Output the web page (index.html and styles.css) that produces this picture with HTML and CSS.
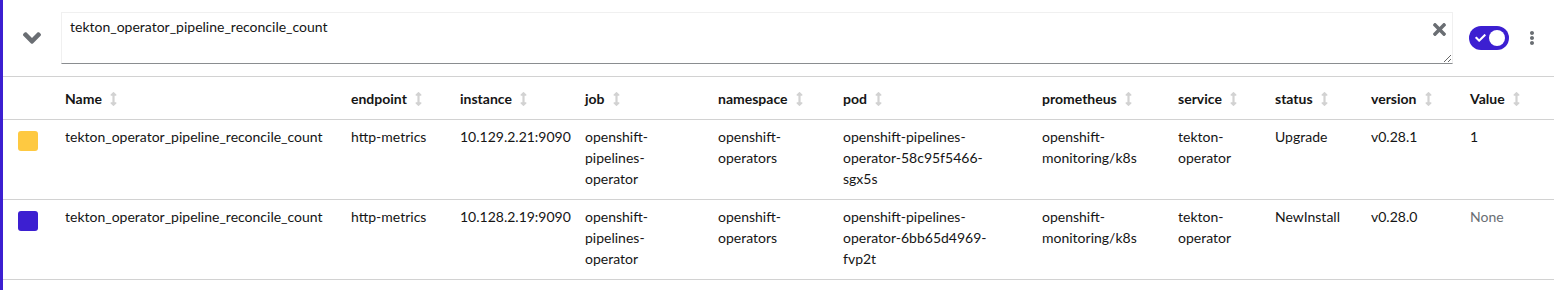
FILE: index.html
```html
<!DOCTYPE html>
<html lang="en">
<head>
<meta charset="utf-8">
<title>Query</title>
<link rel="stylesheet" href="styles.css">
</head>
<body>
<div class="panel">
  <div class="query-row">
    <button class="chevron-btn" aria-label="Collapse">
      <svg class="chevron" viewBox="0 150 320 212" width="18" height="12"><path d="M143 352.3L7 216.3c-9.4-9.4-9.4-24.6 0-33.9l22.6-22.6c9.4-9.4 24.6-9.4 33.9 0l96.4 96.4 96.4-96.4c9.4-9.4 24.6-9.4 33.9 0l22.6 22.6c9.4 9.4 9.4 24.6 0 33.9l-136 136c-9.2 9.4-24.4 9.4-33.8 0z"/></svg>
    </button>
    <div class="query-box">
      <textarea class="query-input" spellcheck="false">tekton_operator_pipeline_reconcile_count</textarea>
      <button class="clear-btn" aria-label="Clear">
        <svg viewBox="0 80 352 352" width="13" height="13"><path d="M242.72 256l100.07-100.07c12.28-12.28 12.28-32.19 0-44.48l-22.24-22.24c-12.28-12.28-32.19-12.28-44.48 0L176 189.28 75.93 89.21c-12.28-12.28-32.19-12.28-44.48 0L9.21 111.45c-12.28 12.28-12.28 32.19 0 44.48L109.28 256 9.21 356.07c-12.28 12.28-12.28 32.19 0 44.48l22.24 22.24c12.28 12.28 32.2 12.28 44.48 0L176 322.72l100.07 100.07c12.28 12.28 32.2 12.28 44.48 0l22.24-22.24c12.28-12.28 12.28-32.19 0-44.48L242.72 256z"/></svg>
      </button>
    </div>
    <span class="switch" role="switch" aria-checked="true">
      <svg class="switch-check" viewBox="0 65 512 382" width="11" height="8"><path d="M173.898 439.404l-166.4-166.4c-9.997-9.997-9.997-26.206 0-36.204l36.203-36.204c9.997-9.998 26.207-9.998 36.204 0L192 312.69 432.095 72.596c9.997-9.997 26.207-9.997 36.204 0l36.203 36.204c9.997 9.997 9.997 26.206 0 36.204l-294.4 294.401c-9.998 9.997-26.207 9.997-36.204-.001z"/></svg>
      <span class="switch-knob"></span>
    </span>
    <button class="kebab-btn" aria-label="Actions">
      <svg viewBox="24 8 144 496" width="4" height="14"><path d="M96 184c39.8 0 72 32.2 72 72s-32.2 72-72 72-72-32.2-72-72 32.2-72 72-72zM24 80c0 39.8 32.2 72 72 72s72-32.2 72-72S135.8 8 96 8 24 40.2 24 80zm0 352c0 39.8 32.2 72 72 72s72-32.2 72-72-32.2-72-72-72-72 32.2-72 72z"/></svg>
    </button>
  </div>

  <table class="results">
    <colgroup>
      <col class="c-swatch"><col class="c-name"><col class="c-endpoint"><col class="c-instance"><col class="c-job"><col class="c-namespace"><col class="c-pod"><col class="c-prom"><col class="c-service"><col class="c-status"><col class="c-version"><col class="c-value">
    </colgroup>
    <thead>
      <tr>
        <th></th>
        <th>Name<svg class="sort" viewBox="0 0 256 512" width="7" height="14"><path d="M214.059 377.941H168V134.059h46.059c21.382 0 32.09-25.851 16.971-40.971L144.971 7.029c-9.373-9.373-24.568-9.373-33.941 0L24.971 93.088c-15.119 15.119-4.411 40.971 16.971 40.971H88v243.882H41.941c-21.382 0-32.09 25.851-16.971 40.971l86.059 86.059c9.373 9.373 24.568 9.373 33.941 0l86.059-86.059c15.12-15.119 4.412-40.971-16.97-40.971z"/></svg></th>
        <th>endpoint<svg class="sort" viewBox="0 0 256 512" width="7" height="14"><path d="M214.059 377.941H168V134.059h46.059c21.382 0 32.09-25.851 16.971-40.971L144.971 7.029c-9.373-9.373-24.568-9.373-33.941 0L24.971 93.088c-15.119 15.119-4.411 40.971 16.971 40.971H88v243.882H41.941c-21.382 0-32.09 25.851-16.971 40.971l86.059 86.059c9.373 9.373 24.568 9.373 33.941 0l86.059-86.059c15.12-15.119 4.412-40.971-16.97-40.971z"/></svg></th>
        <th>instance<svg class="sort" viewBox="0 0 256 512" width="7" height="14"><path d="M214.059 377.941H168V134.059h46.059c21.382 0 32.09-25.851 16.971-40.971L144.971 7.029c-9.373-9.373-24.568-9.373-33.941 0L24.971 93.088c-15.119 15.119-4.411 40.971 16.971 40.971H88v243.882H41.941c-21.382 0-32.09 25.851-16.971 40.971l86.059 86.059c9.373 9.373 24.568 9.373 33.941 0l86.059-86.059c15.12-15.119 4.412-40.971-16.97-40.971z"/></svg></th>
        <th>job<svg class="sort" viewBox="0 0 256 512" width="7" height="14"><path d="M214.059 377.941H168V134.059h46.059c21.382 0 32.09-25.851 16.971-40.971L144.971 7.029c-9.373-9.373-24.568-9.373-33.941 0L24.971 93.088c-15.119 15.119-4.411 40.971 16.971 40.971H88v243.882H41.941c-21.382 0-32.09 25.851-16.971 40.971l86.059 86.059c9.373 9.373 24.568 9.373 33.941 0l86.059-86.059c15.12-15.119 4.412-40.971-16.97-40.971z"/></svg></th>
        <th>namespace<svg class="sort" viewBox="0 0 256 512" width="7" height="14"><path d="M214.059 377.941H168V134.059h46.059c21.382 0 32.09-25.851 16.971-40.971L144.971 7.029c-9.373-9.373-24.568-9.373-33.941 0L24.971 93.088c-15.119 15.119-4.411 40.971 16.971 40.971H88v243.882H41.941c-21.382 0-32.09 25.851-16.971 40.971l86.059 86.059c9.373 9.373 24.568 9.373 33.941 0l86.059-86.059c15.12-15.119 4.412-40.971-16.97-40.971z"/></svg></th>
        <th>pod<svg class="sort" viewBox="0 0 256 512" width="7" height="14"><path d="M214.059 377.941H168V134.059h46.059c21.382 0 32.09-25.851 16.971-40.971L144.971 7.029c-9.373-9.373-24.568-9.373-33.941 0L24.971 93.088c-15.119 15.119-4.411 40.971 16.971 40.971H88v243.882H41.941c-21.382 0-32.09 25.851-16.971 40.971l86.059 86.059c9.373 9.373 24.568 9.373 33.941 0l86.059-86.059c15.12-15.119 4.412-40.971-16.97-40.971z"/></svg></th>
        <th>prometheus<svg class="sort" viewBox="0 0 256 512" width="7" height="14"><path d="M214.059 377.941H168V134.059h46.059c21.382 0 32.09-25.851 16.971-40.971L144.971 7.029c-9.373-9.373-24.568-9.373-33.941 0L24.971 93.088c-15.119 15.119-4.411 40.971 16.971 40.971H88v243.882H41.941c-21.382 0-32.09 25.851-16.971 40.971l86.059 86.059c9.373 9.373 24.568 9.373 33.941 0l86.059-86.059c15.12-15.119 4.412-40.971-16.97-40.971z"/></svg></th>
        <th>service<svg class="sort" viewBox="0 0 256 512" width="7" height="14"><path d="M214.059 377.941H168V134.059h46.059c21.382 0 32.09-25.851 16.971-40.971L144.971 7.029c-9.373-9.373-24.568-9.373-33.941 0L24.971 93.088c-15.119 15.119-4.411 40.971 16.971 40.971H88v243.882H41.941c-21.382 0-32.09 25.851-16.971 40.971l86.059 86.059c9.373 9.373 24.568 9.373 33.941 0l86.059-86.059c15.12-15.119 4.412-40.971-16.97-40.971z"/></svg></th>
        <th>status<svg class="sort" viewBox="0 0 256 512" width="7" height="14"><path d="M214.059 377.941H168V134.059h46.059c21.382 0 32.09-25.851 16.971-40.971L144.971 7.029c-9.373-9.373-24.568-9.373-33.941 0L24.971 93.088c-15.119 15.119-4.411 40.971 16.971 40.971H88v243.882H41.941c-21.382 0-32.09 25.851-16.971 40.971l86.059 86.059c9.373 9.373 24.568 9.373 33.941 0l86.059-86.059c15.12-15.119 4.412-40.971-16.97-40.971z"/></svg></th>
        <th>version<svg class="sort" viewBox="0 0 256 512" width="7" height="14"><path d="M214.059 377.941H168V134.059h46.059c21.382 0 32.09-25.851 16.971-40.971L144.971 7.029c-9.373-9.373-24.568-9.373-33.941 0L24.971 93.088c-15.119 15.119-4.411 40.971 16.971 40.971H88v243.882H41.941c-21.382 0-32.09 25.851-16.971 40.971l86.059 86.059c9.373 9.373 24.568 9.373 33.941 0l86.059-86.059c15.12-15.119 4.412-40.971-16.97-40.971z"/></svg></th>
        <th>Value<svg class="sort" viewBox="0 0 256 512" width="7" height="14"><path d="M214.059 377.941H168V134.059h46.059c21.382 0 32.09-25.851 16.971-40.971L144.971 7.029c-9.373-9.373-24.568-9.373-33.941 0L24.971 93.088c-15.119 15.119-4.411 40.971 16.971 40.971H88v243.882H41.941c-21.382 0-32.09 25.851-16.971 40.971l86.059 86.059c9.373 9.373 24.568 9.373 33.941 0l86.059-86.059c15.12-15.119 4.412-40.971-16.97-40.971z"/></svg></th>
      </tr>
    </thead>
    <tbody>
      <tr>
        <td><span class="swatch swatch-yellow"></span></td>
        <td class="nowrap">tekton_operator_pipeline_reconcile_count</td>
        <td>http-metrics</td>
        <td>10.129.2.21:9090</td>
        <td>openshift-pipelines-operator</td>
        <td>openshift-operators</td>
        <td class="pod">openshift-pipelines-operator-58c95f5466-sgx5s</td>
        <td>openshift-monitoring/k8s</td>
        <td>tekton-operator</td>
        <td>Upgrade</td>
        <td>v0.28.1</td>
        <td>1</td>
      </tr>
      <tr>
        <td><span class="swatch swatch-purple"></span></td>
        <td class="nowrap">tekton_operator_pipeline_reconcile_count</td>
        <td>http-metrics</td>
        <td>10.128.2.19:9090</td>
        <td>openshift-pipelines-operator</td>
        <td>openshift-operators</td>
        <td class="pod">openshift-pipelines-operator-6bb65d4969-fvp2t</td>
        <td>openshift-monitoring/k8s</td>
        <td>tekton-operator</td>
        <td>NewInstall</td>
        <td>v0.28.0</td>
        <td class="muted">None</td>
      </tr>
    </tbody>
  </table>
</div>
</body>
</html>
```

FILE: styles.css
```css
* { box-sizing: border-box; }
html, body { margin: 0; padding: 0; background: #fff; }
body {
  font-family: "Lato", "Liberation Sans", sans-serif;
  font-size: 14px;
  line-height: 21px;
  color: #151515;
}
.panel {
  width: 1554px;
  height: 290px;
  border-left: 3px solid #3c1fd1;
  overflow: hidden;
}
.query-row {
  display: flex;
  align-items: center;
  height: 77px;
  padding: 0 0 1px 20px;
  border-bottom: 1px solid #d2d2d2;
}
.chevron-btn, .clear-btn, .kebab-btn {
  border: 0;
  background: none;
  padding: 0;
  margin: 0;
  display: flex;
  align-items: center;
  justify-content: center;
  cursor: pointer;
}
.chevron { fill: #6a6e73; display: block; }
.chevron-btn { width: 18px; height: 12px; margin-right: 20px; }
.query-box {
  position: relative;
  width: 1392px;
  height: 52px;
}
.query-input {
  display: block;
  width: 100%;
  height: 52px;
  margin: 0;
  padding: 3px 8px 5px;
  font: inherit;
  color: #151515;
  border: 1px solid #f0f0f0;
  border-bottom-color: #8a8d90;
  border-radius: 0;
  outline: none;
  resize: vertical;
  background: #fff;
}
.clear-btn {
  position: absolute;
  top: 11px;
  right: 7px;
  width: 13px;
  height: 13px;
}
.clear-btn svg { fill: #6a6e73; display: block; }
.switch {
  position: relative;
  margin-left: 16px;
  width: 40px;
  height: 24px;
  border-radius: 12px;
  background: #3c1fd1;
  display: flex;
  align-items: center;
}
.switch-check { fill: #fff; margin-left: 6px; display: block; }
.switch-knob {
  position: absolute;
  right: 4px;
  top: 4px;
  width: 16px;
  height: 16px;
  border-radius: 50%;
  background: #fff;
}
.kebab-btn { margin-left: 21px; width: 4px; height: 14px; }
.kebab-btn svg { fill: #6a6e73; display: block; }

.results {
  width: 1551px;
  table-layout: fixed;
  border-collapse: collapse;
}
.c-swatch { width: 62px; }
.c-name { width: 286px; }
.c-endpoint { width: 109px; }
.c-instance { width: 125px; }
.c-job { width: 133px; }
.c-namespace { width: 125px; }
.c-pod { width: 199px; }
.c-prom { width: 136px; }
.c-service { width: 97px; }
.c-status { width: 96px; }
.c-version { width: 99px; }
.c-value { width: 84px; }
.results th, .results td {
  text-align: left;
  padding: 0 22px 0 0;
  border-bottom: 1px solid #d2d2d2;
}
.results th {
  height: 42px;
  padding-top: 2px;
  font-weight: 700;
  vertical-align: middle;
  white-space: nowrap;
}
.results td {
  height: 80px;
  padding-top: 6px;
  padding-bottom: 10px;
  vertical-align: top;
}
.results td.pod { padding-right: 40px; }
.results th:first-child, .results td:first-child { padding-left: 15px; padding-right: 0; }
.sort {
  fill: #d2d2d2;
  margin-left: 8px;
  vertical-align: -2px;
}
.nowrap { white-space: nowrap; }
.muted { color: #6a6e73; }
.swatch {
  display: block;
  width: 20px;
  height: 20px;
  margin-top: 5px;
  border-radius: 3px;
}
.swatch-yellow { background: #fec941; }
.swatch-purple { background: #3c1fd1; }
```
